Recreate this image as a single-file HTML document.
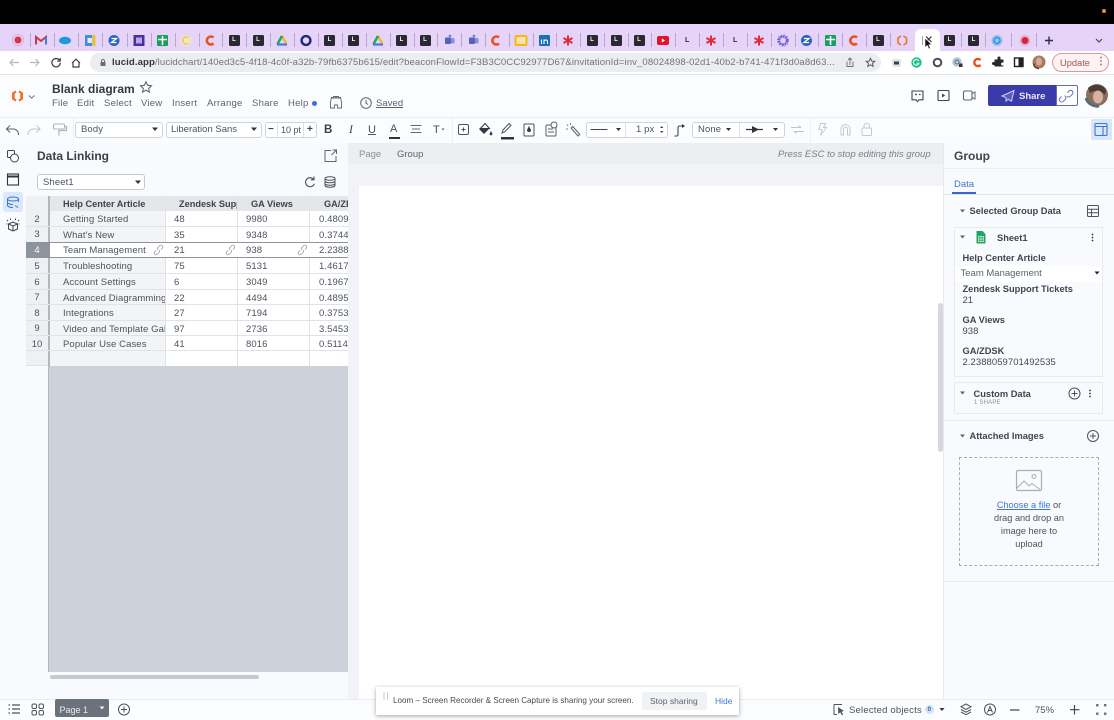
<!DOCTYPE html>
<html><head><meta charset="utf-8"><title>Blank diagram - Lucidchart</title>
<style>
html,body{margin:0;padding:0;background:#fff}
#p{position:relative;width:1114px;height:720px;overflow:hidden;font-family:"Liberation Sans",sans-serif;color:#3a414a;background:#fff;filter:blur(.35px)}
#p div,#p span.a{position:absolute}
.t{white-space:nowrap;line-height:14px;height:14px}
.b{font-weight:bold}
.g{font-size:9.5px;color:#5b6470;letter-spacing:.25px}
.L{width:11px;height:11px;top:35px;background:#2a2833;border-radius:1.5px;color:#fff;font:bold 6px/11px "Liberation Sans",sans-serif;text-align:center}
.sep{width:1px;height:14px;top:33px;background:#b7a8c6}
.s{background:#fff;border:1px solid #cfd3da;border-radius:3px;box-sizing:border-box;height:16px;top:122px}
.c{font-size:9.5px;color:#4b535e;letter-spacing:.1px}
.rn{font-size:9.5px;color:#4b535e;width:22px;left:26px;text-align:center}
.hl{height:1px;background:#dfe2e7}
.vl{width:1px;background:#dfe2e7}
svg{position:absolute;left:0;top:0}
</style></head><body><div id="p">

<!-- top black -->
<div style="left:0;top:0;width:1114px;height:24px;background:#000"></div>
<div style="left:1102px;top:9px;width:4px;height:4px;border-radius:2px;background:#e0962a"></div>
<!-- tab strip -->
<div style="left:0;top:24px;width:1114px;height:27px;background:#e6d4f8"></div>
<div style="left:915px;top:29px;width:25px;height:22px;background:#fff;border-radius:6px 6px 0 0"></div>
<!-- toolbar chrome -->
<div style="left:0;top:51px;width:1114px;height:24px;background:#fff;border-bottom:1px solid #e3e4e8;box-sizing:border-box"></div>
<div style="left:90px;top:53px;width:791px;height:19px;border-radius:10px;background:#ecedf0"></div>
<div class="t" style="left:112px;font-size:9.6px;line-height:14px;letter-spacing:.09px;color:#70757c;top:55.5px"><span style="color:#33373d;font-weight:bold">lucid.app</span>/lucidchart/140ed3c5-4f18-4c0f-a32b-79fb6375b615/edit?beaconFlowId=F3B3C0CC92977D67&amp;invitationId=inv_08024898-02d1-40b2-b741-471f3d0a8d63...</div>

<!-- tabs -->
<div class="L" style="left:228.5px">L</div><div class="L" style="left:252.5px">L</div>
<div class="L" style="left:324px">L</div><div class="L" style="left:348px">L</div>
<div class="L" style="left:396px">L</div><div class="L" style="left:419.5px">L</div>
<div class="L" style="left:586.5px">L</div><div class="L" style="left:610.5px">L</div><div class="L" style="left:633.5px">L</div>
<div class="L" style="left:872.5px">L</div><div class="L" style="left:944px">L</div><div class="L" style="left:968px">L</div>
<div class="t b" style="left:685px;top:34px;font-size:7px;color:#2a2833">L</div>
<div class="t b" style="left:733px;top:34px;font-size:7px;color:#2a2833">L</div>
<div class="sep" style="left:30px"></div><div class="sep" style="left:54px"></div><div class="sep" style="left:78px"></div><div class="sep" style="left:102px"></div><div class="sep" style="left:127px"></div><div class="sep" style="left:151px"></div><div class="sep" style="left:175px"></div><div class="sep" style="left:199px"></div><div class="sep" style="left:222px"></div><div class="sep" style="left:246px"></div><div class="sep" style="left:270px"></div><div class="sep" style="left:294px"></div><div class="sep" style="left:318px"></div><div class="sep" style="left:342px"></div><div class="sep" style="left:366px"></div><div class="sep" style="left:390px"></div><div class="sep" style="left:414px"></div><div class="sep" style="left:437px"></div><div class="sep" style="left:461px"></div><div class="sep" style="left:485px"></div><div class="sep" style="left:509px"></div><div class="sep" style="left:533px"></div><div class="sep" style="left:556px"></div><div class="sep" style="left:580px"></div><div class="sep" style="left:604px"></div><div class="sep" style="left:628px"></div><div class="sep" style="left:651px"></div><div class="sep" style="left:675px"></div><div class="sep" style="left:699px"></div><div class="sep" style="left:723px"></div><div class="sep" style="left:747px"></div><div class="sep" style="left:771px"></div><div class="sep" style="left:795px"></div><div class="sep" style="left:818px"></div><div class="sep" style="left:842px"></div><div class="sep" style="left:866px"></div><div class="sep" style="left:890px"></div><div class="sep" style="left:961px"></div><div class="sep" style="left:985px"></div><div class="sep" style="left:1011px"></div><div class="sep" style="left:1036px"></div>

<!-- app header -->
<div style="left:0;top:75px;width:1114px;height:43px;background:#fbfcfe;border-bottom:1px solid #eceef2;box-sizing:border-box"></div>
<div class="t b" style="left:52px;top:81.500px;font-size:12px;color:#33393f">Blank diagram</div>
<div class="t g" style="left:52px;top:97px">File</div>
<div class="t g" style="left:77px;top:97px">Edit</div>
<div class="t g" style="left:104px;top:97px">Select</div>
<div class="t g" style="left:141px;top:97px">View</div>
<div class="t g" style="left:172px;top:97px">Insert</div>
<div class="t g" style="left:207px;top:97px">Arrange</div>
<div class="t g" style="left:252px;top:97px">Share</div>
<div class="t g" style="left:288px;top:97px">Help</div>
<div style="left:312px;top:101px;width:5px;height:5px;border-radius:3px;background:#3b6fd8"></div>
<div class="t g" style="left:376px;top:97px;letter-spacing:.05px;text-decoration:underline">Saved</div>
<div style="left:988px;top:85px;width:68px;height:21px;background:#3a3aa8;border-radius:2px 0 0 2px"></div>
<div class="t b" style="left:1019px;top:89.500px;font-size:9.5px;color:#e8e9fb">Share</div>
<div style="left:1056px;top:85px;width:22px;height:21px;background:#fff;border:1px solid #6a6ab8;box-sizing:border-box;border-radius:0 2px 2px 0"></div>

<!-- format toolbar -->
<div style="left:0;top:118px;width:1114px;height:25px;background:#fbfcfe"></div>
<div class="vl" style="left:73px;top:118px;height:25px;background:#eef0f3"></div>
<div class="vl" style="left:452px;top:118px;height:25px;background:#eef0f3"></div>
<div class="vl" style="left:810px;top:118px;height:25px;background:#eef0f3"></div>
<div class="s" style="left:75px;width:88px"></div><div class="t c" style="left:81px;top:123px;font-size:9.5px">Body</div>
<div class="s" style="left:166px;width:96px"></div><div class="t c" style="left:171px;top:123px;font-size:9.5px;letter-spacing:0">Liberation Sans</div>
<div class="s" style="left:265px;width:52px"></div><div class="t c" style="left:281px;top:123px;font-size:9px;letter-spacing:0">10 pt</div>
<div class="vl" style="left:277px;top:123px;height:14px"></div><div class="vl" style="left:303px;top:123px;height:14px"></div>
<div class="t b" style="left:268px;top:122.500px;font-size:10px">−</div><div class="t b" style="left:307px;top:122.500px;font-size:10px">+</div>
<div class="t b" style="left:324px;top:123px;font-size:11.5px;color:#39404a">B</div>
<div class="t" style="left:349px;top:123px;font-size:11.5px;font-family:'Liberation Serif',serif;font-style:italic;color:#39404a">I</div>
<div class="t" style="left:368px;top:123px;font-size:11px;text-decoration:underline;color:#4a515b">U</div>
<div class="t" style="left:390px;top:122px;font-size:11px;color:#4a515b">A</div>
<div style="left:389px;top:137px;width:11px;height:2px;background:#333"></div>
<div class="t" style="left:433px;top:123px;font-size:11px;color:#4a515b">T</div>
<div class="s" style="left:586px;width:82px"></div><div class="vl" style="left:625px;top:123px;height:14px"></div>
<div class="t c" style="left:636px;top:123px;font-size:9.5px">1 px</div>
<div class="s" style="left:692px;width:93px"></div><div class="vl" style="left:739px;top:123px;height:14px"></div>
<div class="t c" style="left:698px;top:123px;font-size:9.5px">None</div>
<div style="left:1091px;top:119px;width:21px;height:21px;background:#d9e6f9;border-radius:2px"></div>

<!-- left rail & panel -->
<div style="left:0;top:143px;width:348px;height:556px;background:#f9fafd"></div>
<div style="left:3px;top:192px;width:20px;height:20px;background:#dbe7fb;border-radius:3px"></div>
<div class="t b" style="left:37px;top:149px;font-size:12px;color:#3a4149">Data Linking</div>
<div class="s" style="left:37px;top:174px;width:108px;height:16px;border-color:#c5c9d0"></div>
<div class="t c" style="left:43px;top:176px">Sheet1</div>

<!-- table -->
<div style="left:26px;top:196px;width:322px;height:15px;background:#e4e6ea"></div>
<div style="left:26px;top:196px;width:23px;height:170px;background:#eff0f3"></div>
<div style="left:49px;top:211px;width:117px;height:155px;background:#f3f4f6"></div>
<div style="left:166px;top:211px;width:182px;height:155px;background:#fff"></div>
<div style="left:48px;top:196px;width:2px;height:476px;background:#b2b6be"></div>
<div style="left:49px;top:366px;width:299px;height:306px;background:#cdd1d9"></div>
<div class="hl" style="left:26px;top:226px;width:322px"></div>
<div class="hl" style="left:26px;top:242px;width:322px"></div>
<div class="hl" style="left:26px;top:273px;width:322px"></div>
<div class="hl" style="left:26px;top:289px;width:322px"></div>
<div class="hl" style="left:26px;top:304px;width:322px"></div>
<div class="hl" style="left:26px;top:320px;width:322px"></div>
<div class="hl" style="left:26px;top:335px;width:322px"></div>
<div class="hl" style="left:26px;top:350px;width:322px"></div>
<div class="hl" style="left:26px;top:365px;width:22px"></div>
<div class="vl" style="left:165px;top:196px;height:170px"></div>
<div class="vl" style="left:237px;top:196px;height:170px"></div>
<div class="vl" style="left:309px;top:196px;height:170px"></div>
<div style="left:49px;top:243px;width:299px;height:14px;background:#fff"></div>
<div style="left:26px;top:242px;width:24px;height:16px;background:#8e949e"></div>
<div style="left:49px;top:241.500px;width:299px;height:1.500px;background:#8e939b"></div>
<div style="left:49px;top:256.500px;width:299px;height:1.500px;background:#8e939b"></div>
<div class="t b" style="left:63px;top:196.500px;font-size:9.2px;color:#3d444d">Help Center Article</div>
<div class="t b" style="left:179px;top:196.500px;font-size:9.2px;width:58px;overflow:hidden;color:#3d444d">Zendesk Support</div>
<div class="t b" style="left:251px;top:196.500px;font-size:9.2px;color:#3d444d">GA Views</div>
<div class="t b" style="left:324px;top:196.500px;font-size:9.2px;width:24px;overflow:hidden;color:#3d444d">GA/ZDSK</div>

<div class="t rn" style="top:212.500px">2</div><div class="t rn" style="top:228px">3</div><div class="t rn" style="top:243.500px;color:#fff">4</div><div class="t rn" style="top:259.500px">5</div><div class="t rn" style="top:275.500px">6</div><div class="t rn" style="top:291px">7</div><div class="t rn" style="top:306.500px">8</div><div class="t rn" style="top:322px">9</div><div class="t rn" style="top:337.500px">10</div>

<div class="t c" style="left:63px;top:213px;width:102px;overflow:hidden">Getting Started</div><div class="t c" style="left:174px;top:213px">48</div><div class="t c" style="left:246px;top:213px">9980</div><div class="t c" style="left:319px;top:213px;width:29px;overflow:hidden">0.480961</div>
<div class="t c" style="left:63px;top:228.500px;width:102px;overflow:hidden">What's New</div><div class="t c" style="left:174px;top:228.500px">35</div><div class="t c" style="left:246px;top:228.500px">9348</div><div class="t c" style="left:319px;top:228.500px;width:29px;overflow:hidden">0.374411</div>
<div class="t c" style="left:63px;top:244px;width:102px;overflow:hidden">Team Management</div><div class="t c" style="left:174px;top:244px">21</div><div class="t c" style="left:246px;top:244px">938</div><div class="t c" style="left:319px;top:244px;width:29px;overflow:hidden">2.238805</div>
<div class="t c" style="left:63px;top:260px;width:102px;overflow:hidden">Troubleshooting</div><div class="t c" style="left:174px;top:260px">75</div><div class="t c" style="left:246px;top:260px">5131</div><div class="t c" style="left:319px;top:260px;width:29px;overflow:hidden">1.461700</div>
<div class="t c" style="left:63px;top:276px;width:102px;overflow:hidden">Account Settings</div><div class="t c" style="left:174px;top:276px">6</div><div class="t c" style="left:246px;top:276px">3049</div><div class="t c" style="left:319px;top:276px;width:29px;overflow:hidden">0.196787</div>
<div class="t c" style="left:63px;top:291.500px;width:102px;overflow:hidden">Advanced Diagramming</div><div class="t c" style="left:174px;top:291.500px">22</div><div class="t c" style="left:246px;top:291.500px">4494</div><div class="t c" style="left:319px;top:291.500px;width:29px;overflow:hidden">0.489541</div>
<div class="t c" style="left:63px;top:307px;width:102px;overflow:hidden">Integrations</div><div class="t c" style="left:174px;top:307px">27</div><div class="t c" style="left:246px;top:307px">7194</div><div class="t c" style="left:319px;top:307px;width:29px;overflow:hidden">0.375313</div>
<div class="t c" style="left:63px;top:322.500px;width:102px;overflow:hidden">Video and Template Gallery</div><div class="t c" style="left:174px;top:322.500px">97</div><div class="t c" style="left:246px;top:322.500px">2736</div><div class="t c" style="left:319px;top:322.500px;width:29px;overflow:hidden">3.545321</div>
<div class="t c" style="left:63px;top:338px;width:102px;overflow:hidden">Popular Use Cases</div><div class="t c" style="left:174px;top:338px">41</div><div class="t c" style="left:246px;top:338px">8016</div><div class="t c" style="left:319px;top:338px;width:29px;overflow:hidden">0.511477</div>
<div style="left:50px;top:675px;width:209px;height:4px;border-radius:2px;background:#c6c9cf"></div>

<!-- canvas -->
<div style="left:348px;top:143px;width:595px;height:556px;background:#f1f3f7"></div>
<div style="left:348px;top:143px;width:595px;height:21px;background:#eceef1"></div>
<div style="left:359px;top:186px;width:584px;height:513px;background:#fff"></div>
<div class="t" style="left:359px;top:148px;font-size:9.5px;color:#8a9099">Page</div>
<div class="t" style="left:397px;top:148px;font-size:9.5px;color:#5d646e">Group</div>
<div class="t" style="left:778px;top:148px;font-size:9.5px;font-style:italic;color:#7b818a">Press ESC to stop editing this group</div>

<!-- right panel -->
<div style="left:943px;top:143px;width:171px;height:556px;background:#f9fafd"></div>
<div style="left:938px;top:303px;width:5px;height:149px;background:#d5d8dd;border-radius:3px"></div>
<div class="hl" style="left:943px;top:168px;width:171px;background:#eceef2"></div>
<div class="hl" style="left:943px;top:194px;width:171px;background:#e2e5ea"></div>
<div class="t b" style="left:954px;top:149px;font-size:12px;color:#3f464e">Group</div>
<div class="t" style="left:954px;top:178px;font-size:9.5px;color:#3f76d4">Data</div>
<div style="left:952px;top:192px;width:24px;height:2px;background:#3568c8"></div>
<div class="t b" style="left:969.500px;top:204px;font-size:9.3px;color:#3f464e">Selected Group Data</div>
<div style="left:954px;top:227px;width:149px;height:150px;border:1px solid #e8eaee;box-sizing:border-box"></div>
<div class="t b" style="left:997px;top:230.500px;font-size:9.3px;color:#3f464e">Sheet1</div>
<div class="t b" style="left:962.500px;top:251px;font-size:9.3px;color:#3f464e">Help Center Article</div>
<div style="left:955px;top:266px;width:147px;height:16px;background:#fff"></div>
<div class="t" style="left:960.500px;top:267px;font-size:9.5px;color:#5a626c">Team Management</div>
<div class="t b" style="left:962.500px;top:282px;font-size:9.3px;color:#3f464e">Zendesk Support Tickets</div>
<div class="t" style="left:962.500px;top:294px;font-size:9.5px;color:#434a53">21</div>
<div class="t b" style="left:962.500px;top:313px;font-size:9.3px;color:#3f464e">GA Views</div>
<div class="t" style="left:962.500px;top:325px;font-size:9.5px;color:#434a53">938</div>
<div class="t b" style="left:962.500px;top:344px;font-size:9.3px;color:#3f464e">GA/ZDSK</div>
<div class="t" style="left:962.500px;top:356px;font-size:9.5px;color:#434a53;letter-spacing:.05px">2.2388059701492535</div>
<div style="left:954px;top:382px;width:149px;height:32px;border:1px solid #e8eaee;box-sizing:border-box"></div>
<div class="t b" style="left:973.500px;top:387px;font-size:9.3px;color:#3f464e">Custom Data</div>
<div class="t" style="left:974px;top:396px;font-size:6px;color:#8a9099;letter-spacing:.2px">1 SHAPE</div>
<div class="hl" style="left:943px;top:420px;width:171px;background:#e8eaee"></div>
<div class="t b" style="left:969.500px;top:429px;font-size:9.3px;color:#3f464e">Attached Images</div>
<div style="left:959px;top:457px;width:140px;height:109px;border:1px dashed #a9aeb6;box-sizing:border-box"></div>
<div class="t" style="left:959px;top:499px;width:140px;text-align:center;font-size:9.2px;line-height:13px;height:auto;white-space:normal;color:#4b535e"><span style="color:#3f76d4;text-decoration:underline">Choose a file</span> or<br>drag and drop an<br>image here to<br>upload</div>
<div class="hl" style="left:943px;top:581px;width:171px;background:#e8eaee"></div>
<div class="vl" style="left:943px;top:143px;height:556px;background:#e6e8ec"></div>

<!-- bottom bar -->
<div style="left:0;top:699px;width:1114px;height:21px;background:#fbfcfe;border-top:1px solid #e9ebef;box-sizing:border-box"></div>
<div style="left:55px;top:699px;width:54px;height:18px;background:#6c727c;border-radius:2px"></div>
<div class="t" style="left:59.500px;top:702.500px;font-size:9px;color:#e8eaed">Page 1</div>
<div class="t" style="left:849px;top:704px;font-size:9.5px;color:#4b535e;letter-spacing:.2px">Selected objects</div>
<div style="left:925px;top:705px;width:9px;height:9px;background:#d3e2f9;border-radius:5px"></div>
<div class="t b" style="left:927.500px;top:703px;font-size:6.5px;color:#3568c8">0</div>
<div class="t" style="left:1035px;top:704px;font-size:9.5px;color:#4b535e">75%</div>

<!-- loom -->
<div style="left:376px;top:687px;width:363px;height:28px;background:#fff;box-shadow:0 1px 4px rgba(0,0,0,.35)"></div>
<div class="t" style="left:393px;top:694px;font-size:8.1px;color:#454b54">Loom – Screen Recorder &amp; Screen Capture is sharing your screen.</div>
<div style="left:642px;top:692px;width:65px;height:18px;background:#f1f2f4;border-radius:2px"></div>
<div class="t" style="left:650px;top:694px;font-size:8.5px;color:#5a626c">Stop sharing</div>
<div class="t" style="left:715px;top:694px;font-size:8.5px;color:#3f76d4">Hide</div>

<!-- update -->
<div style="left:1052px;top:53px;width:57px;height:19px;border:1px solid #d79a9e;background:#fdf3f3;border-radius:10px;box-sizing:border-box"></div>
<div class="t" style="left:1060px;top:55.500px;font-size:9.3px;color:#a8525a">Update</div>
<div class="t" style="left:1096px;top:55px;font-size:10px;color:#a8525a;font-weight:bold">⋮</div>

<!-- graphics -->
<svg width="1114" height="720" viewBox="0 0 1114 720" fill="none">
<!-- tab icons -->
<circle cx="18" cy="40" r="3.500" fill="#d8324e"/><circle cx="18" cy="40" r="5.500" stroke="#d8324e" stroke-opacity=".25"/>
<path d="M36 44.500V37l5 4 5-4v7.500" stroke="#c9364a" stroke-width="2"/><path d="M46 37v7.500" stroke="#3d7fd8" stroke-width="2"/>
<ellipse cx="65" cy="40.500" rx="6" ry="3.800" fill="#1f9ad6"/>
<rect x="85" y="35" width="10.500" height="11" fill="#4a8bdb"/><rect x="87.500" y="38" width="5" height="5" fill="#e8e8f5"/><rect x="92" y="35" width="3.500" height="11" fill="#e3c24a"/>
<circle cx="114" cy="40.500" r="5.500" fill="#2a62c8"/><path d="M111.500 38.500h5l-5 4h5" stroke="#fff" stroke-width="1.300"/>
<rect x="133.500" y="35" width="11" height="11" fill="#4b2f9c"/><rect x="136" y="37.500" width="6" height="6" fill="#b9a6e2"/>
<rect x="157" y="35" width="11" height="11" rx="1" fill="#16a05c"/><path d="M162.500 36v9M158 39.500h9" stroke="#fff" stroke-width="1.600"/>
<circle cx="186" cy="40.500" r="5.500" fill="#f3e7b5"/><path d="M188.500 37.500a3.600 3.600 0 1 0 0 6" stroke="#d7c27c" stroke-width="1.300"/>
<path d="M213.500 37.500a4 4 0 1 0 0 6" stroke="#e8501f" stroke-width="2.600"/>
<path d="M282 36l4.500 8" stroke="#f4b728" stroke-width="2.400"/><path d="M282 36l-4.500 8" stroke="#1ea362" stroke-width="2.400"/><path d="M277 44.500h10" stroke="#3b7de0" stroke-width="2.200"/>
<circle cx="306" cy="40.500" r="4.400" stroke="#1f2a78" stroke-width="2.400"/>
<path d="M378 36l4.500 8" stroke="#f4b728" stroke-width="2.400"/><path d="M378 36l-4.500 8" stroke="#1ea362" stroke-width="2.400"/><path d="M373 44.500h10" stroke="#3b7de0" stroke-width="2.200"/>
<rect x="445" y="37.500" width="6" height="6.500" rx="1" fill="#5a5fb8"/><rect x="451" y="38" width="3.500" height="5.500" rx="1" fill="#8a8ed8"/><circle cx="450" cy="36" r="1.400" fill="#7a7fd0"/>
<rect x="469" y="37.500" width="6" height="6.500" rx="1" fill="#5a5fb8"/><rect x="475" y="38" width="3.500" height="5.500" rx="1" fill="#8a8ed8"/><circle cx="474" cy="36" r="1.400" fill="#7a7fd0"/>
<path d="M499 37.500a4 4 0 1 0 0 6" stroke="#e8501f" stroke-width="2.600"/>
<rect x="515.500" y="36" width="11" height="9" rx="1" stroke="#f2b71e" stroke-width="2" fill="#f8e4a8"/>
<rect x="539" y="35" width="11" height="11" rx="1" fill="#1a6fb8"/><path d="M541.500 39.500v4.500M544 44v-4.500M544 41c1-1.500 3.500-1.500 3.500 1V44" stroke="#fff" stroke-width="1.100"/>
<path d="M568 35.500v10M563.500 38l9 5M572.500 38l-9 5" stroke="#e32a3c" stroke-width="2"/>
<rect x="657" y="36" width="12" height="9" rx="2" fill="#e0142c"/><path d="M661.800 38.500v4l3.200-2z" fill="#fff"/>
<path d="M711 35.500v10M706.500 38l9 5M715.500 38l-9 5" stroke="#e32a3c" stroke-width="2"/>
<path d="M759 35.500v10M754.500 38l9 5M763.500 38l-9 5" stroke="#e32a3c" stroke-width="2"/>
<circle cx="783" cy="40.500" r="4" stroke="#6d5ad8" stroke-width="2.400" stroke-dasharray="2 .6"/><circle cx="783" cy="40.500" r="5.600" stroke="#8a78e4" stroke-width="1" stroke-dasharray="1.500 1.500"/>
<circle cx="806.500" cy="40.500" r="5.500" fill="#2a62c8"/><path d="M804 38.500h5l-5 4h5" stroke="#fff" stroke-width="1.300"/>
<rect x="825" y="35" width="11" height="11" rx="1" fill="#16a05c"/><path d="M830.500 36v9M826 39.500h9" stroke="#fff" stroke-width="1.600"/>
<path d="M857 37.500a4 4 0 1 0 0 6" stroke="#e8501f" stroke-width="2.600"/>
<path d="M901 36l-3 2v5l3 2M903.500 36l3 2v5l-3 2" stroke="#e8742a" stroke-width="1.600"/>
<path d="M922.500 36v9" stroke="#a3a7ad"/>
<path d="M926 36.500l5.500 5.500M931.500 36.500L926 42" stroke="#333" stroke-width="1.200"/>
<path d="M925 38l0 9.500 2.300-2 1.700 3.500 1.500-.8-1.700-3.300 3-.4z" fill="#111" stroke="#fff" stroke-width=".6"/>
<circle cx="997" cy="40.500" r="5.500" fill="#8fc0ee"/><circle cx="997" cy="40.500" r="3" stroke="#2d86d8" stroke-width="1.200"/>
<circle cx="1025" cy="40.500" r="3.500" fill="#d8243e"/><circle cx="1025" cy="40.500" r="5.500" fill="#d8243e" fill-opacity=".2"/>
<path d="M1049 36.500v8M1045 40.500h8" stroke="#2a2f3a" stroke-width="1.400"/>
<path d="M1096 39l3 3 3-3" stroke="#4a4a55" stroke-width="1.200"/>
<!-- nav -->
<path d="M19 62.500h-9M13.500 59l-3.500 3.500 3.500 3.500" stroke="#b3b6bb" stroke-width="1.200"/>
<path d="M30 62.500h9M35.500 59l3.500 3.500-3.500 3.500" stroke="#b3b6bb" stroke-width="1.200"/>
<path d="M59.500 60.200a4.200 4.200 0 1 0 .8 2.500M60.200 58v3h-3" stroke="#3a3d42" stroke-width="1.200"/>
<path d="M72 63l4-3.800 4 3.800M73 62.500V67h6v-4.500" stroke="#3a3d42" stroke-width="1.200"/>
<rect x="100.500" y="62" width="5" height="4" rx=".6" fill="#6a6d72"/><path d="M101.500 62v-1a1.500 1.500 0 0 1 3 0v1" stroke="#6a6d72"/>
<path d="M847 61.500v5h6v-5M850 65v-6.500M848 60l2-2 2 2" stroke="#6a6d72" stroke-width=".9"/>
<path d="M870.500 58.300l1.300 2.800 3 .3-2.300 2 .7 3-2.700-1.600-2.700 1.600.7-3-2.300-2 3-.3z" stroke="#4a4d52" stroke-width=".9"/>
<!-- extensions -->
<rect x="892" y="59" width="9" height="8" rx="2" fill="#dfe3ec"/><rect x="894" y="61.500" width="5" height="3" fill="#333c52"/>
<circle cx="916.500" cy="62.500" r="5.200" fill="#1fc28c"/><path d="M918.700 61a2.800 2.800 0 1 0 .2 2.200h-2" stroke="#fff" stroke-width="1"/>
<circle cx="937.500" cy="62.500" r="3.800" stroke="#4a4d52" stroke-width="2"/>
<circle cx="957" cy="62" r="4.800" fill="#b5c9dc"/><circle cx="957" cy="62" r="2" stroke="#56718c"/><rect x="959" y="63.500" width="3.500" height="3.500" fill="#333"/>
<path d="M980.500 60a3.600 3.600 0 1 0 0 5" stroke="#e8501f" stroke-width="2.400"/>
<path d="M994.500 59.500h3v-1.500a1.500 1.500 0 0 1 3 0v1.500h3v3h-1a1.500 1.500 0 0 0 0 3h1v1h-9v-1.500h-1a1.500 1.500 0 0 1 0-3h1z" fill="#26282c"/>
<rect x="1014.500" y="58" width="8.500" height="8.500" stroke="#1f2126" stroke-width="1.400" fill="#fff"/><rect x="1018.500" y="58" width="4.500" height="8.500" fill="#1f2126"/>
<circle cx="1039" cy="62" r="6.500" fill="#a87a62"/><ellipse cx="1039" cy="61.500" rx="3" ry="4" fill="#d5ab97"/><path d="M1034 63.500c-.8 3 2 5 5 5" stroke="#5c3a2c" stroke-width="1.500"/>
<!-- logo -->
<path d="M15.500 90.500l-3.500 2.200v6.600l3.500 2.200 1.200-1.800-2-1.300v-4.800l2-1.300zM19.500 90.500l3.500 2.200v6.600l-3.500 2.200-1.200-1.800 2-1.300v-4.800l-2-1.300z" fill="#e8742a"/>
<path d="M29 95.500l2.700 2.700 2.700-2.700" stroke="#6a7078"/>
<path d="M146 81.800l1.700 3.500 3.800.5-2.800 2.600.7 3.700-3.400-1.900-3.400 1.900.7-3.700-2.800-2.600 3.800-.5z" stroke="#535a64"/>
<!-- binoculars -->
<path d="M331 98h9M330.500 102v6h4v-3h3v3h4v-6l-1-4.500h-2v-1h-2v1.500h-1v-1.500h-2v1h-2z" stroke="#5f6670" stroke-width=".9"/>
<circle cx="366" cy="103" r="5.300" stroke="#5f6670"/><path d="M366 100v3.300l2 1.200" stroke="#5f6670"/>
<!-- header right icons -->
<path d="M912 91h11v8.800h-4l-1.500 1.700-1.500-1.700h-4z" stroke="#3f464e" stroke-width="1.100"/><path d="M915 94.500h2M919 94.500h1.500" stroke="#3f464e" stroke-width="1.300"/>
<rect x="938" y="90.500" width="11" height="10" rx="1" stroke="#3f464e" stroke-width="1.100"/><path d="M942 93.500v4l3.200-2z" fill="#3f464e"/>
<rect x="963.500" y="91" width="8.500" height="9" rx="1.500" stroke="#5f6670" stroke-width="1.100"/><path d="M972 93.500l3-1.500v7l-3-1.500" stroke="#5f6670"/>
<path d="M1014 90.500l-12 5.500 4 1.700v3.500l2-2 3.500 2z" stroke="#cfd1f0" fill="#5a5ac0"/>
<path d="M1064 97.500l-1.500 1.500a2.300 2.300 0 0 0 3.300 3.300l2-2a2.300 2.300 0 0 0-.6-3.600M1070 93.500l1.500-1.500a2.300 2.300 0 0 1 3.300 0 2.300 2.300 0 0 1 0 3.300l-2 2a2.300 2.300 0 0 1-3.300 0" transform="translate(-2.500 -1)" stroke="#6a6ab8"/>
<circle cx="1097" cy="95" r="11" fill="#8a6e60"/><path d="M1088 88c4-4 14-5 18 2l-1 5c-4-5-12-5-15-2z" fill="#4c3a34"/><ellipse cx="1098" cy="97" rx="5" ry="6.500" fill="#d7b2a0"/><path d="M1086 98c2 6 8 9 13 8" stroke="#5a6a76" stroke-width="3"/>
<!-- format toolbar icons -->
<path d="M18.500 135c0-4-2.500-6-5.500-6h-6M10 125.500L6.500 129l3.500 3.500" stroke="#5f6670" stroke-width="1.100"/>
<path d="M28 135c0-4 2.500-6 5.500-6h6M36.500 125.500L40 129l-3.500 3.500" stroke="#c6c9cf" stroke-width="1.100"/>
<rect x="53.500" y="124" width="11" height="5" rx="1" stroke="#b0b4bb"/><path d="M64.500 126.500h2v4H59v5" stroke="#b0b4bb" stroke-width="1.300"/>
<path d="M152 127.500h6l-3 3.500z" fill="#333"/><path d="M251 127.500h6l-3 3.500z" fill="#333"/>
<path d="M410.500 125.500h11M412 129h8M410.500 132.500h11" stroke="#646b75"/>
<path d="M441.500 128.500h3l-1.500 2z" fill="#5a626c"/>
<rect x="458.500" y="124.500" width="10" height="10" rx="1.500" stroke="#4b535e"/><path d="M463.500 127.500v4M461.500 129.500h4" stroke="#4b535e"/>
<path d="M485 123.500l-6 5.500 5 5 5.500-5.500z" fill="#333a44"/><path d="M485 123.500l4.500 5h-9z" fill="#fff" stroke="#333a44"/><path d="M491 131l1.300 2.500a1.400 1.400 0 1 1-2.600 0z" fill="#333a44"/>
<path d="M502 133l1-3 6-6.500 2 2-6.500 6.500z" stroke="#4b535e"/><rect x="501" y="137" width="13" height="2.500" fill="#2f343b"/>
<rect x="524" y="124" width="10" height="12" rx="1" stroke="#4b535e"/><path d="M529 126l2 4a2 2 0 1 1-4 0z" fill="#333a44"/>
<rect x="546" y="125" width="10" height="11" rx="1" stroke="#5a626c"/><path d="M548 129h5M548 132h6" stroke="#5a626c"/><circle cx="554" cy="125" r="3" fill="#fbfcfe" stroke="#5a626c"/>
<path d="M571 128l7 8 1.800-1.500-7-8z" stroke="#5a626c"/><path d="M567 124.500l1 1.500M566 129h2M570.500 123v2" stroke="#7a818b"/>
<path d="M590.500 129.500h17" stroke="#3f464e" stroke-width="1.100"/><path d="M616 128h5l-2.500 3z" fill="#333"/>
<path d="M660 128l1.700-2 1.700 2zM660 131l1.700 2 1.700-2z" fill="#3f464e"/>
<path d="M674.500 136h2.500c.8 0 1-1 1-2v-6c0-1 .5-2 1.500-2H684" stroke="#3f464e" stroke-width="1.100"/><path d="M682 124l3 2-3 2z" fill="#333"/>
<path d="M726 128h5l-2.500 3z" fill="#333"/>
<path d="M746 129.500h17" stroke="#333" stroke-width="1.300"/><path d="M752 126l7 3.500-7 3.500z" fill="#333"/>
<path d="M773 128h5l-2.500 3z" fill="#333"/>
<path d="M791 127.500h10M798 125.500l3 2M804 131.500h-10M797 133.500l-3-2" stroke="#c0c4ca"/>
<path d="M820.500 123.500h5l-2 4h3l-6 8 1.500-6h-3z" stroke="#c6c9cf"/>
<path d="M841 135v-6a4.500 4.500 0 0 1 9 0v6h-2.500v-6a2 2 0 0 0-4 0v6z" stroke="#c6c9cf"/>
<rect x="862" y="128" width="9.500" height="7.500" rx="1" stroke="#c6c9cf"/><path d="M864 128v-2a2.700 2.700 0 0 1 5.500 0v2" stroke="#c6c9cf"/>
<rect x="1095" y="123.500" width="12" height="12" rx="1" stroke="#3b78cc" stroke-width="1.100"/><path d="M1095 126.500h12M1103 126.500v9" stroke="#3b78cc" stroke-width="1.100"/>
<!-- left rail icons -->
<rect x="7.500" y="150.500" width="7" height="7" rx="1" stroke="#3f464e"/><circle cx="14.500" cy="158" r="4" stroke="#3f464e" fill="#f9fafd"/>
<rect x="7.500" y="174" width="11" height="11" stroke="#2f353d" stroke-width="1.100"/><path d="M7.500 176.500h11" stroke="#2f353d" stroke-width="2"/>
<ellipse cx="13" cy="199" rx="5.500" ry="2" stroke="#3b78cc"/><path d="M7.500 199v6.500c0 1 2.500 2 5.500 2M18.500 199v3M7.500 202.500c0 1 2.500 2 5.500 2" stroke="#3b78cc"/><path d="M15 205.500l3 2" stroke="#3b78cc"/>
<path d="M8.500 224l4.500-2 4.500 2v5l-4.500 2-4.500-2zM8.500 224l4.500 2 4.500-2M13 226v5" stroke="#3f464e"/>
<path d="M7 220l1 1M10.500 218.500v1.500M15.500 218.500v1.500M19 220l-1 1M6.500 224h1M18.500 224h1" stroke="#3f464e"/>
<!-- panel icons -->
<path d="M331 150.500h-6v11h11v-5.500M331.500 155l4.500-4.500M332.500 150h4v4" stroke="#5f6670"/>
<path d="M135 180.500h6l-3 3.500z" fill="#333"/>
<path d="M313.500 179.300a4.500 4.500 0 1 0 .8 4.500M314 176.500v3.300h-3.300" stroke="#4b535e" stroke-width="1.100"/>
<ellipse cx="330" cy="178.500" rx="5" ry="1.800" stroke="#4b535e"/><path d="M325 178.500v7c0 1 2 1.800 5 1.800s5-.8 5-1.800v-7M325 181c0 1 2 1.800 5 1.800s5-.8 5-1.800M325 183.500c0 1 2 1.800 5 1.800s5-.8 5-1.800" stroke="#4b535e"/>
<!-- link icons in row 4 -->
<g stroke="#a3a8af" stroke-width=".9">
<path d="M156 250.500l-1.300 1.300a1.700 1.700 0 0 0 2.500 2.500l1.800-1.800a1.700 1.700 0 0 0 0-2.500M161 249.500l1.300-1.300a1.700 1.700 0 0 0-2.500-2.500l-1.800 1.800a1.700 1.700 0 0 0 0 2.500"/>
<path d="M228 250.500l-1.300 1.300a1.700 1.700 0 0 0 2.500 2.500l1.800-1.800a1.700 1.700 0 0 0 0-2.500M233 249.500l1.300-1.300a1.700 1.700 0 0 0-2.500-2.500l-1.800 1.800a1.700 1.700 0 0 0 0 2.500"/>
<path d="M300 250.500l-1.300 1.300a1.700 1.700 0 0 0 2.500 2.500l1.800-1.800a1.700 1.700 0 0 0 0-2.500M305 249.500l1.300-1.300a1.700 1.700 0 0 0-2.500-2.500l-1.800 1.800a1.700 1.700 0 0 0 0 2.500"/>
</g>
<!-- right panel icons -->
<path d="M960 209.500h5l-2.500 3zM960 235.500h5l-2.500 3zM960 391.500h5l-2.500 3zM960 434.500h5l-2.500 3z" fill="#5f6670"/>
<rect x="1087.500" y="205.500" width="11" height="11" rx="1" stroke="#4b535e"/><path d="M1087.500 209.200h11M1087.500 212.800h11M1091.500 209.200v7.300" stroke="#4b535e"/>
<path d="M976.500 231h6l3 3v9.500h-9z" fill="#22a565"/><path d="M978.500 236.500h5v5h-5zM978.500 239h5M981 236.500v5" stroke="#d6f0e2" stroke-width=".7"/>
<circle cx="1092.500" cy="234.500" r=".9" fill="#333"/><circle cx="1092.500" cy="237.500" r=".9" fill="#333"/><circle cx="1092.500" cy="240.500" r=".9" fill="#333"/>
<path d="M1094.500 271.500h5l-2.500 3z" fill="#222"/>
<circle cx="1074.500" cy="393.500" r="5.500" stroke="#4b535e"/><path d="M1074.500 390.500v6M1071.500 393.500h6" stroke="#4b535e"/>
<circle cx="1090" cy="390.500" r=".9" fill="#333"/><circle cx="1090" cy="393.500" r=".9" fill="#333"/><circle cx="1090" cy="396.500" r=".9" fill="#333"/>
<circle cx="1093" cy="436" r="5.500" stroke="#4b535e"/><path d="M1093 433v6M1090 436h6" stroke="#4b535e"/>
<rect x="1016.500" y="470.500" width="25" height="20" rx="1.500" stroke="#a9aeb6" stroke-width="1.200"/><circle cx="1034" cy="476.500" r="2" stroke="#a9aeb6"/><path d="M1017 488l7-7 5 5 3-2.500 8 6" stroke="#a9aeb6"/>
<!-- bottom icons -->
<path d="M12 705h8M12 709h8M12 713h8" stroke="#4b535e" stroke-width="1.200"/><path d="M8.500 705h1.500M8.500 709h1.500M8.500 713h1.500" stroke="#4b535e" stroke-width="1.200"/>
<rect x="32" y="704" width="4.500" height="4.500" rx="1.500" stroke="#4b535e"/><rect x="39" y="704" width="4.500" height="4.500" rx="1.500" stroke="#4b535e"/><rect x="32" y="710.500" width="4.500" height="4.500" rx="1.500" stroke="#4b535e"/><rect x="39" y="710.500" width="4.500" height="4.500" rx="1.500" stroke="#4b535e"/>
<path d="M99.500 706.500h5l-2.500 3z" fill="#f0f1f3"/>
<circle cx="124" cy="709.500" r="5.500" stroke="#4b535e"/><path d="M124 706.500v6M121 709.500h6" stroke="#4b535e"/>
<path d="M384 692v8M387.500 692v8" stroke="#c4c7cc"/>
<path d="M834 704.500h8M834 704.500v10h3" stroke="#4b535e"/><path d="M838 707l6 4-2.500.7 1.700 2.800-1.300.7-1.600-2.800-2 1.600z" fill="#4b535e"/>
<path d="M939.500 708h5l-2.500 3z" fill="#333"/>
<path d="M966 704l5 2.700-5 2.700-5-2.700zM961 709.500l5 2.700 5-2.700M961 712l5 2.700 5-2.700" stroke="#4b535e"/>
<circle cx="990" cy="709.500" r="5.500" stroke="#4b535e"/><path d="M987.500 712.500l2.500-6 2.500 6M988.500 710.500h3" stroke="#4b535e"/>
<path d="M1010 710h9.500" stroke="#3f464e" stroke-width="1.200"/>
<path d="M1074.500 705v9.500M1070 709.700h9.500" stroke="#3f464e" stroke-width="1.200"/>
<path d="M1096.500 704.500l2 2M1096.500 704.500h2M1096.500 704.500v2M1106 704.500l-2 2M1106 704.500h-2M1106 704.500v2M1096.500 714.500l2-2M1096.500 714.500h2M1096.500 714.500v-2M1106 714.500l-2-2M1106 714.500h-2M1106 714.500v-2" stroke="#5f6670" stroke-width=".9"/>
</svg>
</div></body></html>
